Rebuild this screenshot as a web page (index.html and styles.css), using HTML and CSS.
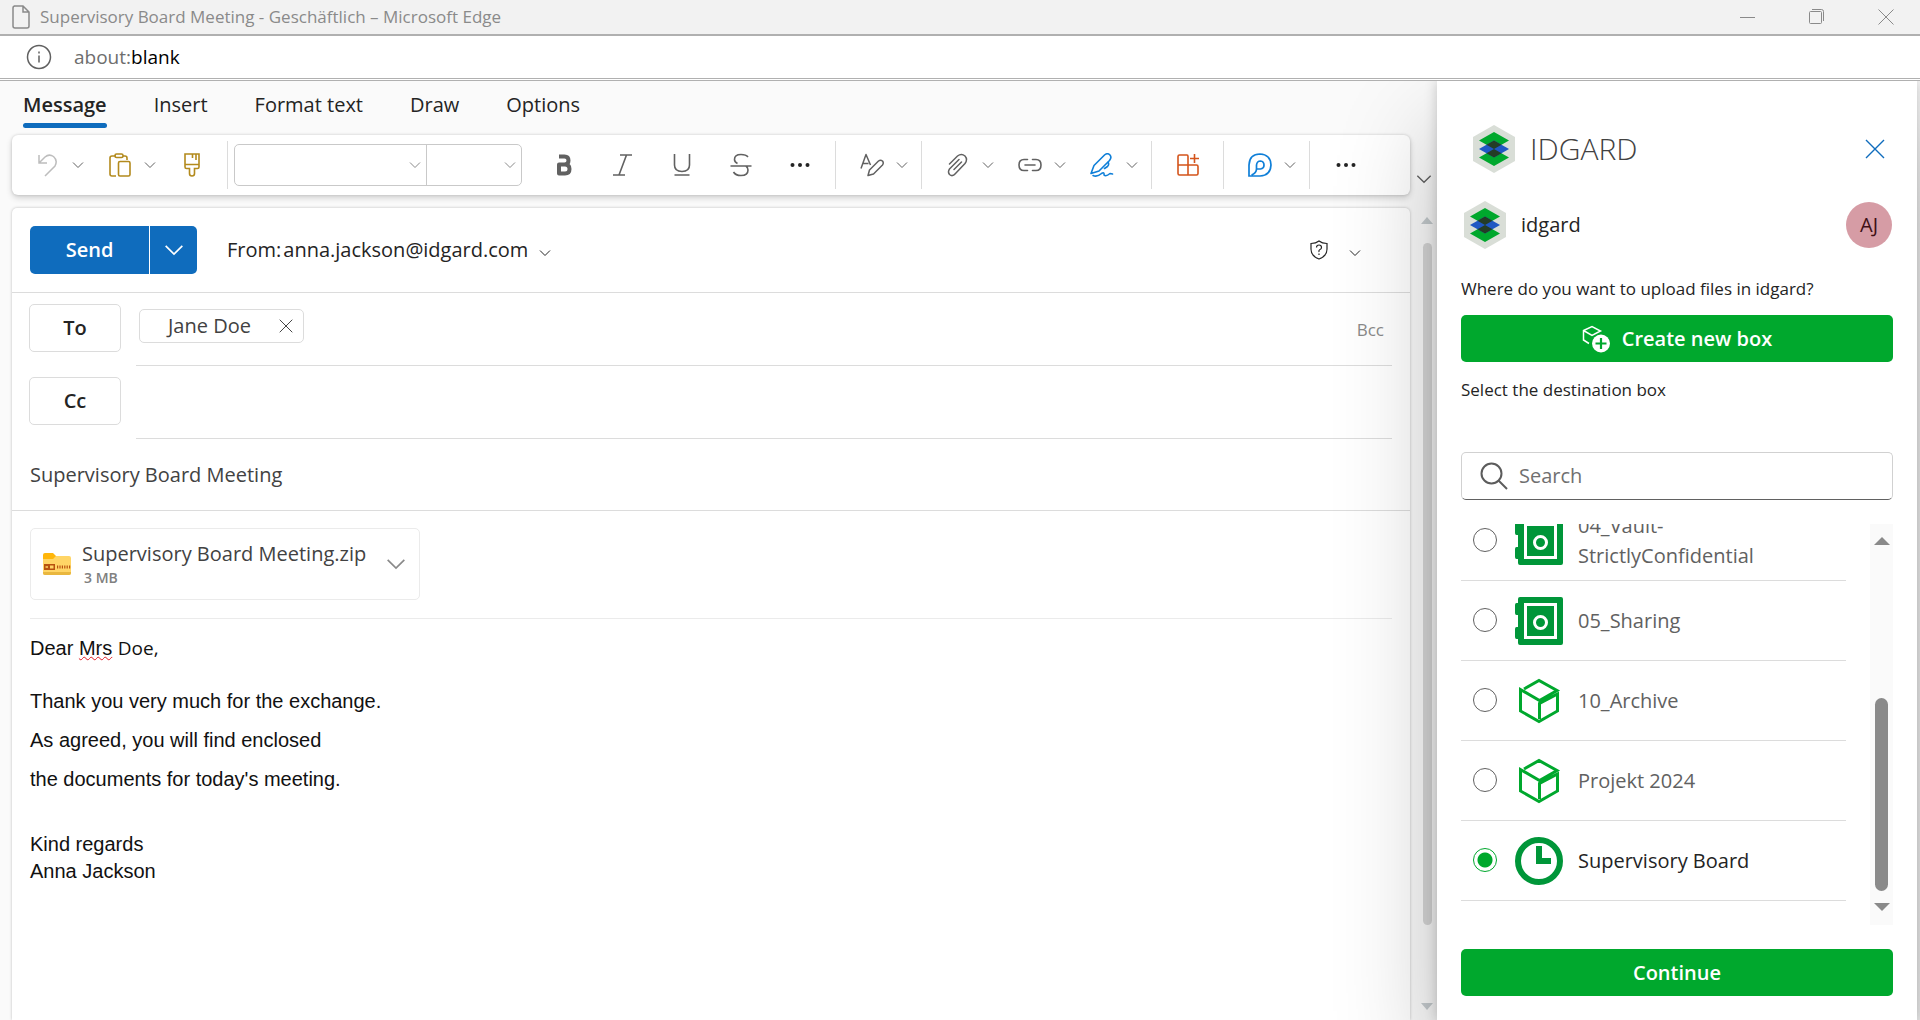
FILE: index.html
```html
<!DOCTYPE html>
<html lang="en">
<head>
<meta charset="utf-8">
<title>Supervisory Board Meeting</title>
<link rel="stylesheet" href="styles.css">
</head>
<body>
<svg class="sprite" aria-hidden="true">
  <symbol id="chevron" viewBox="0 0 12 12"><path d="M1 3.5 6 8.5 11 3.5" fill="none" stroke="currentColor"/></symbol>
  <symbol id="cross" viewBox="0 0 20 20"><path d="M1 1 19 19M19 1 1 19" fill="none" stroke="currentColor" stroke-width="1.4"/></symbol>
  <symbol id="dots" viewBox="0 0 24 24"><g fill="#242424"><circle cx="4.500" cy="12" r="2"/><circle cx="12" cy="12" r="2"/><circle cx="19.500" cy="12" r="2"/></g></symbol>
  <symbol id="logo" viewBox="0 0 42 48">
    <path d="M21 0 42 12V36L21 48 0 36V12Z" fill="#d9ded7"/>
    <path d="M21 7 36 15.500 21 24 6 15.500ZM21 24 36 32.500 21 41 6 32.500Z" fill="#00a82d"/>
    <path d="M21 15.500 36 24 21 32.500 6 24Z" fill="#1f57c3"/>
    <path d="M21 15.500 28.500 19.750 21 24 13.500 19.750ZM21 24 28.500 28.250 21 32.500 13.500 28.250Z" fill="#243c26"/>
  </symbol>
  <symbol id="vault" viewBox="0 0 48 48">
    <path d="M5 0H46Q48 0 48 2V46Q48 48 46 48H5Q3 48 3 46V42H1.500Q0 42 0 40V32Q0 30 1.500 30H3V18H1.500Q0 18 0 16V8Q0 6 1.500 6H3V2Q3 0 5 0Z" fill="#009639"/>
    <rect x="10.500" y="7.500" width="30" height="33" fill="none" stroke="#fff" stroke-width="3"/>
    <circle cx="25.500" cy="25.500" r="6" fill="none" stroke="#fff" stroke-width="3"/>
  </symbol>
  <symbol id="box" viewBox="0 0 48 48">
    <g fill="none" stroke="#00a82d" stroke-width="3">
      <path d="M9 12 24 3.500 42 13.500 24.500 23.500 5.500 12.500V34L24 44.500 42.500 34V17L24.500 26.500V42"/>
    </g>
  </symbol>
  <symbol id="clock" viewBox="0 0 48 48">
    <circle cx="24" cy="24" r="21" fill="none" stroke="#009639" stroke-width="6"/>
    <path d="M24 9V24H36" fill="none" stroke="#009639" stroke-width="6"/>
    <path d="M21 21H27V27H21Z" fill="#009639"/>
  </symbol>
</svg>

<header class="titlebar">
  <svg class="page-icon" viewBox="0 0 20 24"><path d="M3 1H12L18 7V21Q18 23 16 23H4Q2 23 2 21V3Q2 1 4 1ZM12 1V7H18" fill="none" stroke="#8a8a8a" stroke-width="1.500"/></svg>
  <span class="window-title">Supervisory Board Meeting - Geschäftlich – Microsoft Edge</span>
  <div class="window-controls">
    <button aria-label="Minimize"><svg viewBox="0 0 16 16"><path d="M0 8.500H15" stroke="currentColor"/></svg></button>
    <button aria-label="Restore"><svg viewBox="0 0 16 16" fill="none" stroke="currentColor"><rect x=".5" y="2.500" width="12" height="12" rx="1"/><path d="M3 .5H12.500Q14.500.5 14.500 2.500V12"/></svg></button>
    <button aria-label="Close window"><svg viewBox="0 0 16 16"><path d="M.5.5 15.500 15.500M15.500.5.5 15.500" stroke="currentColor"/></svg></button>
  </div>
</header>
<div class="addressbar">
  <svg class="info-icon" viewBox="0 0 26 26" fill="none" stroke="#606060" stroke-width="1.500"><circle cx="13" cy="13" r="11.500"/><path d="M13 11.500V18.500M13 7.500V9.500"/></svg>
  <span class="address">about:<b>blank</b></span>
</div>

<main class="workspace">
  <section class="mail">
    <nav class="tabs">
      <a class="tab active" href="#message">Message</a>
      <a class="tab" href="#insert">Insert</a>
      <a class="tab" href="#format">Format text</a>
      <a class="tab" href="#draw">Draw</a>
      <a class="tab" href="#options">Options</a>
    </nav>
    <div class="ribbon">
      <div class="toolbar">
        <div class="group">
          <button class="tool faded" aria-label="Undo"><svg class="ico" viewBox="0 0 24 24"><path d="M3 2V10H11M3 10 9 4Q13 0.500 17.500 3.500 22 7.500 19 13L9 23" fill="none" stroke="currentColor" stroke-width="1.500"/></svg><svg class="chev"><use href="#chevron"/></svg></button>
          <button class="tool" aria-label="Paste"><svg class="ico gold" viewBox="0 0 24 24" fill="none" stroke="currentColor" stroke-width="1.600"><path d="M8 3H4Q2 3 2 5V21Q2 23 4 23H8M15 3H17Q19 3 19 5V7"/><rect x="7" y="1" width="8" height="3.500" rx="1.500"/><rect x="10.500" y="8.500" width="11.500" height="14.500" rx="1.500"/></svg><svg class="chev"><use href="#chevron"/></svg></button>
          <button class="tool" aria-label="Format painter"><svg class="ico gold" viewBox="0 0 24 24" fill="none" stroke="currentColor" stroke-width="1.600"><path d="M5 1H19V14Q19 15.500 17.500 15.500H14.500V20.500Q14.500 23 12 23T9.500 20.500V15.500H6.500Q5 15.500 5 14ZM5 11.500H19M12.500 1V5M16 1V7"/></svg></button>
        </div>
        <div class="fonts">
          <span class="picker family"><select aria-label="Font"><option></option></select><svg class="chev"><use href="#chevron"/></svg></span>
          <span class="picker size"><select aria-label="Font size"><option></option></select><svg class="chev"><use href="#chevron"/></svg></span>
        </div>
        <div class="group styles">
          <button class="tool" aria-label="Bold"><svg class="ico" viewBox="0 0 24 24"><path d="M7 3.500H12.500Q16.500 3.500 16.500 7.500T12.500 11.500H7M7 11.500H13Q17.500 11.500 17.500 16T13 20.500H7Z" fill="none" stroke="currentColor" stroke-width="4" stroke-linejoin="round"/></svg></button>
          <button class="tool" aria-label="Italic"><svg class="ico" viewBox="0 0 24 24"><path d="M9 2H21M2 22H14M15.500 2 8 22" fill="none" stroke="currentColor" stroke-width="1.600"/></svg></button>
          <button class="tool" aria-label="Underline"><svg class="ico" viewBox="0 0 24 24"><path d="M4.500 1V12Q4.500 18.500 12 18.500T19.500 12V1M4.500 22H19.500" fill="none" stroke="currentColor" stroke-width="1.600"/></svg></button>
          <button class="tool" aria-label="Strikethrough"><svg class="ico" viewBox="0 0 24 24"><path d="M19 4Q17 1.500 12 1.500 5.500 1.500 5.500 6.500 5.500 9 8.500 10.500M1.500 13H22.500M17 13Q19 14.500 19 17 19 22.500 12 22.500 6.500 22.500 4.500 19" fill="none" stroke="currentColor" stroke-width="1.600"/></svg></button>
          <button class="tool" aria-label="More formatting"><svg class="ico"><use href="#dots"/></svg></button>
        </div>
        <div class="group">
          <button class="tool" aria-label="Styles"><svg class="ico" viewBox="0 0 24 24" fill="none" stroke="currentColor" stroke-width="1.500" stroke-linejoin="round"><path d="M1 15.500 6 1.500 10.500 12M3 10.500H8.500M8 22.500 9.500 17 18.500 8Q20.500 6.500 22.500 8 24 10 22.500 12L13.500 21Z"/></svg><svg class="chev"><use href="#chevron"/></svg></button>
        </div>
        <div class="group">
          <button class="tool" aria-label="Attach file"><svg class="ico" viewBox="0 0 24 24" fill="none" stroke="currentColor" stroke-width="1.500" stroke-linecap="round"><path d="M3.500 11 11.500 3Q15.500 0 19 3 22 6.500 19 10.500L9 21Q6.500 24 3.500 21.500 1.500 19 3.500 16L13 6.500M8 16.500 15.500 9"/></svg><svg class="chev"><use href="#chevron"/></svg></button>
          <button class="tool" aria-label="Insert link"><svg class="ico" viewBox="0 0 24 24" fill="none" stroke="currentColor" stroke-width="1.600" stroke-linecap="round"><path d="M9.500 6.500H6Q1 6.500 1 12T6 17.500H9.500M14.500 6.500H18Q23 6.500 23 12T18 17.500H14.500M7 12H17"/></svg><svg class="chev"><use href="#chevron"/></svg></button>
          <button class="tool" aria-label="Signature"><svg class="ico blue" viewBox="0 0 24 24" fill="none" stroke="currentColor" stroke-width="1.600" stroke-linecap="round" stroke-linejoin="round"><path d="M1 20.500 4 12.500 14.500 2Q17.500-.5 20 2 22 4.500 19.500 7.500L9 18ZM18 9Q19.500 11.500 17.500 13.500L14.500 15.500M3 22.500Q7 24.500 11.500 20.500 14.500 18.500 14 22 16 24 20 20.500L22.500 21"/></svg><svg class="chev"><use href="#chevron"/></svg></button>
        </div>
        <div class="group apps">
          <button class="tool" aria-label="Apps"><svg class="ico orange" viewBox="0 0 24 24" fill="none" stroke="currentColor" stroke-width="1.600"><path d="M2 12V3.500Q2 2 3.500 2H11Q12 2 12 3.500V12H20.500Q22 12 22 13.500V20.500Q22 22 20.500 22H3.500Q2 22 2 20.500V12H12V22M18.500 1V10M14 5.500H23"/></svg></button>
        </div>
        <div class="group">
          <button class="tool" aria-label="Loop components"><svg class="ico blue" viewBox="0 0 24 24" fill="none" stroke="currentColor" stroke-width="1.700"><path d="M1 23V12Q1.500 1 12 1 22.500 1.500 23 12 22.500 22.500 12 23ZM3.500 22Q8.500 20 8.500 16V12Q9 8 12.500 8 16 8.500 16 12 16 15.500 12.500 16 10 16 8.500 16"/></svg><svg class="chev"><use href="#chevron"/></svg></button>
        </div>
        <div class="group last">
          <button class="tool" aria-label="More options"><svg class="ico"><use href="#dots"/></svg></button>
        </div>
      </div>
      <button class="collapse" aria-label="Ribbon options"><svg><use href="#chevron"/></svg></button>
    </div>
    <div class="compose">
      <article class="card">
        <div class="sender">
          <div class="send"><button class="send-main">Send</button><button class="send-more" aria-label="Send options"><svg><use href="#chevron"/></svg></button></div>
          <button class="from"><span class="from-label">From:</span><span>anna.jackson@idgard.com</span><svg class="chev"><use href="#chevron"/></svg></button>
          <button class="shield" aria-label="Sensitivity"><svg class="shield-icon" viewBox="0 0 20 20" fill="none" stroke="currentColor" stroke-width="1.200"><path d="M10 1Q13 3.500 18 3.500V9Q18 16 10 19 2 16 2 9V3.500Q7 3.500 10 1Z"/><path d="M7.500 7.500Q7.500 5 10 5T12.500 7.500Q12.500 9 11 9.500T10 12M10 13.500V15"/></svg><svg class="chev"><use href="#chevron"/></svg></button>
        </div>
        <div class="recipient">
          <button class="field-button">To</button>
          <div class="field"><span class="chip">Jane Doe<button aria-label="Remove Jane Doe"><svg><use href="#cross"/></svg></button></span><a class="bcc" href="#bcc">Bcc</a></div>
        </div>
        <div class="recipient">
          <button class="field-button">Cc</button>
          <div class="field"></div>
        </div>
        <input class="subject" type="text" aria-label="Subject" value="Supervisory Board Meeting">
        <div class="message">
          <div class="attachment">
            <svg class="zip" viewBox="0 0 28 22"><path d="M0 2Q0 0 2 0H10L13 3V8H0Z" fill="#ffb60a"/><path d="M0 6H10L13 3H26Q28 3 28 5V20Q28 22 26 22H2Q0 22 0 20Z" fill="#ffd566"/><path d="M0 19H28V20Q28 22 26 22H2Q0 22 0 20Z" fill="#e9b73f"/><rect x="1" y="11" width="11" height="6" fill="#b8520f"/><rect x="7" y="12.500" width="3.500" height="3" fill="#ffd566"/><path d="M2.500 14H5" stroke="#ffd566" stroke-width="1.500"/><path d="M14 14H28" stroke="#b8520f" stroke-width="3" stroke-dasharray="1.200 1.200"/></svg>
            <div class="file"><span class="file-name">Supervisory Board Meeting.zip</span><span class="file-size">3 MB</span></div>
            <button class="file-more" aria-label="Attachment actions"><svg><use href="#chevron"/></svg></button>
          </div>
          <div class="letter">
            <p class="greeting">Dear <span class="typo">Mrs</span> <span class="name">Doe,</span></p>
            <p class="text">Thank you very much for the exchange.<br>As agreed, you will find enclosed<br>the documents for today's meeting.</p>
            <p class="closing">Kind regards<br>Anna Jackson</p>
          </div>
        </div>
      </article>
      <div class="pane-scroll"><i class="up"></i><i class="thumb"></i><i class="down"></i></div>
    </div>
  </section>

  <aside class="panel">
    <div class="brand">
      <svg class="logo"><use href="#logo"/></svg>
      <h1>IDGARD</h1>
      <button class="close" aria-label="Close panel"><svg><use href="#cross"/></svg></button>
    </div>
    <div class="account">
      <svg class="logo"><use href="#logo"/></svg>
      <span class="account-name">idgard</span>
      <span class="avatar">AJ</span>
    </div>
    <p class="hint">Where do you want to upload files in idgard?</p>
    <button class="primary create"><svg viewBox="0 0 28 28"><path d="M7 18.500 1.500 15V5.500L10 1.500 18.500 6 10 10.500 1.500 5.500" fill="none" stroke="#fff" stroke-width="1.500"/><circle cx="19" cy="18.500" r="9" fill="#fff"/><path d="M19 13V24M13.500 18.500H24.500" stroke="#00a82d" stroke-width="2.200"/></svg>Create new box</button>
    <p class="hint">Select the destination box</p>
    <label class="search"><svg viewBox="0 0 28 28" fill="none" stroke="#5c5c5c" stroke-width="2"><circle cx="11.500" cy="11.500" r="10"/><path d="M18.500 18.500 27 27"/></svg><input type="text" placeholder="Search" aria-label="Search"></label>
    <div class="boxes">
      <div class="list">
        <label class="box"><input type="radio" name="box"><svg><use href="#vault"/></svg><span>04_Vault-<br>StrictlyConfidential</span></label>
        <label class="box"><input type="radio" name="box"><svg><use href="#vault"/></svg><span>05_Sharing</span></label>
        <label class="box"><input type="radio" name="box"><svg><use href="#box"/></svg><span>10_Archive</span></label>
        <label class="box"><input type="radio" name="box"><svg><use href="#box"/></svg><span>Projekt 2024</span></label>
        <label class="box"><input type="radio" name="box" checked><svg><use href="#clock"/></svg><span>Supervisory Board</span></label>
      </div>
      <div class="list-scroll"><i class="up"></i><i class="thumb"></i><i class="down"></i></div>
    </div>
    <button class="primary">Continue</button>
  </aside>
</main>
</body>
</html>
```

FILE: styles.css
```css
* { box-sizing: border-box; }
body {
  margin: 0;
  height: 100vh;
  display: flex;
  flex-direction: column;
  overflow: hidden;
  background: #fafafa;
  color: #242424;
  font: 20px/28px "Open Sans", "Noto Sans", sans-serif;
}
h1, p { margin: 0; font-weight: 400; }
button, input, select { font: inherit; color: inherit; }
button { padding: 0; border: 0; background: none; cursor: pointer; }
svg { display: block; flex: none; }
a { color: inherit; text-decoration: none; }
.sprite { position: absolute; width: 0; height: 0; }
.chev { width: 12px; height: 12px; }

/* browser chrome */
.titlebar {
  display: flex;
  align-items: center;
  height: 36px;
  padding-left: 10px;
  background: #f2f2f2;
  border-bottom: 2px solid #b0b0b0;
  color: #8a8a8a;
}
.page-icon { width: 22px; height: 24px; }
.window-title { margin-left: 8px; font-size: 17px; }
.window-controls { display: flex; gap: 53px; margin-left: auto; padding-right: 26px; }
.window-controls svg { width: 16px; height: 16px; }
.addressbar {
  display: flex;
  align-items: center;
  height: 45px;
  padding-left: 26px;
  background: #fff;
  border-bottom: 3px double #b0b0b0;
}
.info-icon { width: 26px; height: 26px; }
.address { margin-left: 22px; color: #6e6e6e; font-size: 19px; }
.address b { color: #000; font-weight: 400; }

.workspace { flex: 1; display: flex; min-height: 0; padding-right: 3px; }

/* mail editor */
.mail { flex: 1; display: flex; flex-direction: column; min-width: 0; padding-left: 12px; }
.tabs { display: flex; gap: 47px; padding: 10px 11px 7px; }
.tab::after { content: ""; display: block; height: 5px; margin-top: 4px; border-radius: 3px; }
.tab.active { font-weight: 600; }
.tab.active::after { background: #0f6cbd; }
.ribbon { display: flex; }
.toolbar {
  flex: 1;
  display: flex;
  align-items: center;
  height: 60px;
  background: #fff;
  border-radius: 6px;
  box-shadow: 0 0 3px rgba(0, 0, 0, .16), 0 3px 6px rgba(0, 0, 0, .16);
}
.group {
  display: flex;
  align-items: center;
  gap: 24px;
  height: 48px;
  padding: 0 13px 0 24px;
  border-right: 1px solid #dcdcdc;
  color: #616161;
}
.group:first-child, .apps { padding-right: 23px; }
.group.last { border: 0; }
.tool { display: flex; align-items: center; gap: 12px; }
.ico { width: 24px; height: 24px; }
.faded .ico { color: #bdbdbd; }
.gold { color: #b38a1d; }
.blue { color: #0f7fd8; }
.orange { color: #d4541b; }
.fonts { display: flex; height: 42px; margin-left: 6px; border: 1px solid #c9c9c9; border-radius: 5px; }
.picker { display: flex; align-items: center; }
.picker select { width: 100%; height: 100%; border: 0; background: none; appearance: none; }
.picker .chev { margin: 0 5px 0 -17px; color: #8a8a8a; pointer-events: none; }
.family { width: 192px; border-right: 1px solid #c9c9c9; }
.size { width: 94px; }
.group.styles { gap: 35px; padding: 0 23px 0 30px; }
.collapse { align-self: flex-end; width: 27px; height: 32px; color: #616161; }
.collapse svg { width: 16px; height: 16px; margin: 0 auto; }

.compose { flex: 1; display: flex; min-height: 0; padding-top: 13px; }
.card {
  flex: 1;
  min-width: 0;
  background: #fff;
  border-radius: 5px 5px 0 0;
  box-shadow: 0 0 3px rgba(0, 0, 0, .25);
}
.sender { display: flex; align-items: center; height: 85px; padding: 0 49px 0 18px; border-bottom: 1px solid #dcdcdc; }
.send { display: flex; height: 48px; background: #0f6cbd; color: #fff; border-radius: 5px; }
.send-main { width: 120px; border-right: 1px solid #fff; font-weight: 600; }
.send-more { width: 47px; }
.send-more svg { width: 20px; height: 20px; margin: 0 auto; }
.from { display: flex; align-items: center; margin-left: 30px; }
.from-label { margin-right: 2px; }
.from .chev { margin-left: 11px; }
.shield { display: flex; align-items: center; gap: 20px; margin-left: auto; }
.shield-icon { width: 20px; height: 20px; }
.from .chev, .shield .chev { margin-top: 6px; }
.recipient { display: flex; align-items: flex-start; gap: 15px; height: 73px; padding: 11px 18px 0 17px; }
.field-button { width: 92px; height: 48px; border: 1px solid #dcdcdc; border-radius: 5px; font-weight: 600; }
.field { flex: 1; display: flex; align-items: flex-start; justify-content: space-between; height: 62px; padding: 5px 8px 0 3px; border-bottom: 1px solid #dcdcdc; }
.chip { display: flex; align-items: center; gap: 28px; height: 34px; padding: 0 10px 0 28px; border: 1px solid #dcdcdc; border-radius: 5px; color: #424242; }
.chip svg { width: 14px; height: 14px; }
.bcc { padding-top: 7px; color: #8a8a8a; font-size: 17px; }
.subject {
  display: block;
  width: 100%;
  height: 72px;
  padding: 0 18px;
  border: 0;
  border-bottom: 1px solid #dcdcdc;
  background: none;
  color: #424242;
}
.message { padding: 17px 18px 0; }
.attachment {
  display: flex;
  align-items: center;
  width: 390px;
  height: 72px;
  padding: 0 13px 0 12px;
  border: 1px solid #ebebeb;
  border-radius: 5px;
}
.zip { width: 28px; height: 22px; }
.file { display: flex; flex-direction: column; margin-left: 11px; color: #424242; }
.file-size { padding-left: 2px; color: #808080; font-size: 14px; font-weight: 600; line-height: 20px; }
.file-more { margin-left: auto; color: #8a8a8a; }
.file-more svg { width: 20px; height: 20px; stroke-width: 1px; }
.letter {
  margin-top: 18px;
  padding-top: 16px;
  border-top: 1px solid #ebebeb;
  color: #111;
  font: 20px/27px "Liberation Sans", Arial, sans-serif;
}
.typo { text-decoration: underline wavy #e01b24 1px; text-underline-offset: 1px; text-decoration-skip-ink: none; }
.name { font-family: "Open Sans", sans-serif; font-size: 19px; }
.text { margin-top: 20px; line-height: 39px; }
.closing { margin-top: 32px; }

.pane-scroll { display: flex; flex-direction: column; align-items: center; width: 27px; padding: 9px 0 10px 7px; }
.pane-scroll .thumb { flex: 1; width: 9px; margin: 19px 0 78px; border-radius: 5px; background: #d6d6d6; }
.up, .down { border: 6px solid transparent; }
.up { border-top: 0; border-bottom: 7px solid #c5cbce; }
.down { border-bottom: 0; border-top: 7px solid #c5cbce; }

/* add-in panel */
.panel {
  position: relative;
  display: flex;
  flex-direction: column;
  width: 480px;
  padding: 44px 24px 24px;
  background: #fff;
  box-shadow: 0 0 12px rgba(0, 0, 0, .2), 0 48px 96px rgba(0, 0, 0, .24);
  clip-path: inset(0 -3px 0 -120px);
}
.logo { width: 42px; height: 48px; }
.brand, .account { display: flex; align-items: center; gap: 15px; }
.brand { padding: 0 8px 0 12px; }
.brand h1 { font-size: 30px; font-weight: 300; color: #424242; }
.close { margin-left: auto; color: #0f6cbd; }
.close svg { width: 20px; height: 20px; }
.account { margin-top: 28px; padding: 0 1px 0 3px; }
.avatar { width: 46px; height: 46px; margin-left: auto; border-radius: 50%; background: #d69ca5; color: #3f1016; line-height: 46px; text-align: center; font-weight: 500; }
.hint { font-size: 17px; margin-top: 26px; }
.primary {
  display: flex;
  align-items: center;
  justify-content: center;
  gap: 12px;
  flex: none;
  height: 47px;
  border-radius: 5px;
  background: #00a82d;
  color: #fff;
  font-weight: 600;
}
.create { margin-top: 12px; }
.create svg { width: 28px; height: 28px; }
.create + .hint { margin-top: 14px; }
.search {
  display: flex;
  align-items: center;
  gap: 11px;
  flex: none;
  height: 48px;
  margin-top: 48px;
  padding: 0 18px;
  border: 1px solid #d1d1d1;
  border-bottom-color: #616161;
  border-radius: 5px;
}
.search svg { width: 28px; height: 28px; }
.search input { flex: 1; min-width: 0; border: 0; padding: 0; outline: 0; background: none; }
.search input::placeholder { color: #707070; opacity: 1; }
.boxes { flex: 1; display: flex; gap: 24px; min-height: 0; margin: 24px 0; }
.list { flex: 1; display: flex; flex-direction: column; justify-content: flex-end; overflow: hidden; padding-bottom: 24px; }
.box { display: flex; align-items: center; flex: none; height: 80px; padding-left: 12px; border-bottom: 1px solid #dcdcdc; color: #616161; line-height: 30px; }
.box svg { width: 48px; height: 48px; margin: 0 15px 0 18px; }
.box input { appearance: none; width: 24px; height: 24px; margin: 0 0 2px; border: 1px solid #616161; border-radius: 50%; }
.box input:checked { border-color: #00a82d; background: radial-gradient(circle, #00a82d 7px, #fff 8px); }
.box:has(:checked) { color: #242424; }
.list-scroll { display: flex; flex-direction: column; align-items: center; width: 23px; padding: 13px 0 14px; background: #fafafa; }
.list-scroll .up, .list-scroll .down { border-left-width: 8px; border-right-width: 8px; }
.list-scroll .up { border-bottom: 8px solid #8a8a8a; }
.list-scroll .down { border-top: 8px solid #8a8a8a; }
.list-scroll .thumb { width: 13px; height: 193px; margin: auto 0 12px; border-radius: 7px; background: #8a8a8a; }
```
